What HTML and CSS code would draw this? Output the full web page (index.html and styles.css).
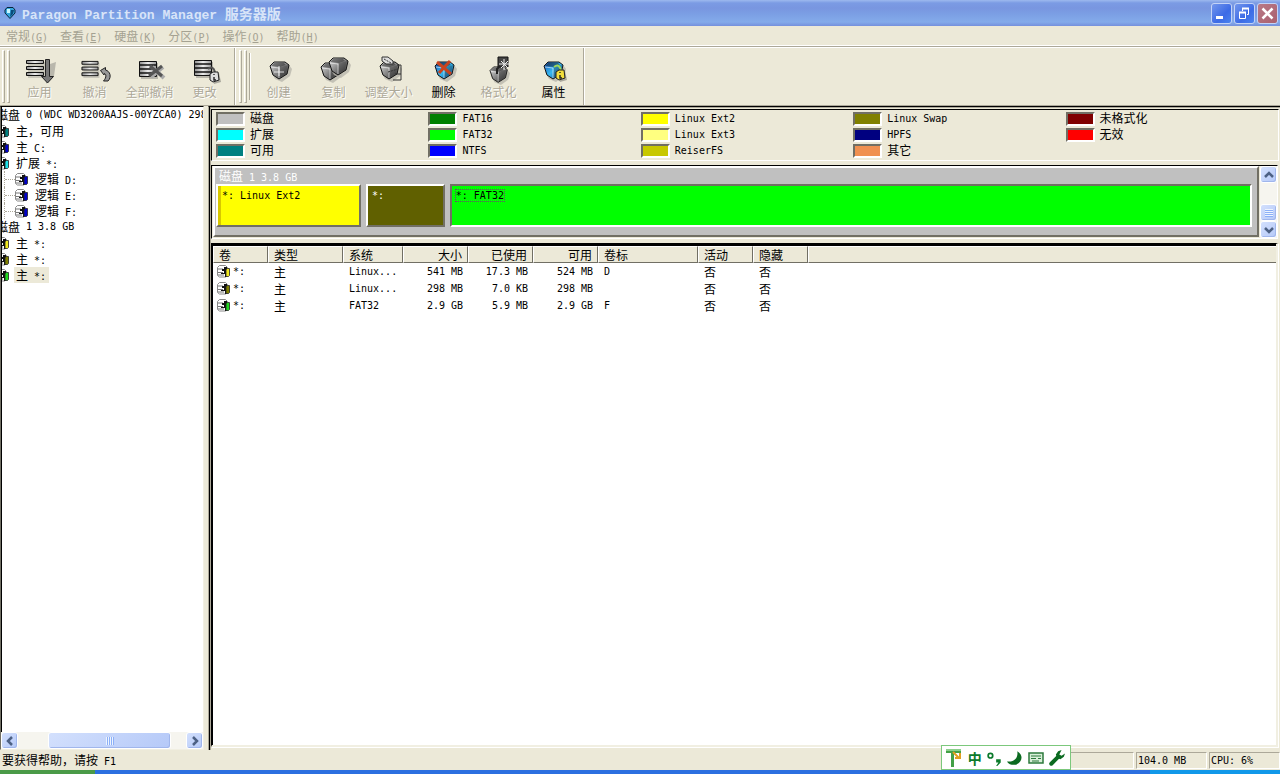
FILE: index.html
```html
<!DOCTYPE html>
<html lang="zh-CN">
<head>
    <meta charset="UTF-8">
    <meta name="viewport" content="width=device-width, initial-scale=1.0">
    <title>Paragon Partition Manager 服务器版</title>
    <link rel="stylesheet" href="styles.css">
</head>
<body>
    <svg class="defs" width="0" height="0">
        <defs>
            <linearGradient id="metal" x1="0" y1="0" x2="1" y2="1">
                <stop offset="0" stop-color="#e4e4e4"/>
                <stop offset="0.5" stop-color="#858585"/>
                <stop offset="1" stop-color="#333"/>
            </linearGradient>
            <linearGradient id="blue" x1="0" y1="0" x2="1" y2="1">
                <stop offset="0" stop-color="#1b55b8"/>
                <stop offset="0.5" stop-color="#35b8f2"/>
                <stop offset="1" stop-color="#0a4a98"/>
            </linearGradient>
            <linearGradient id="bar" x1="0" y1="0" x2="1" y2="0">
                <stop offset="0" stop-color="#8c8c8c"/>
                <stop offset="0.5" stop-color="#eee"/>
                <stop offset="1" stop-color="#999"/>
            </linearGradient>
        </defs>
        <symbol id="gem" viewBox="0 0 24 22">
            <path d="M4 5L20 4L23 8L21 15L13 21L6 18L2 11Z" fill="#b9b7ac" opacity="0.8"/>
            <path d="M1 5L5 1H16L20 4L18 13L10 18L4 14Z" fill="inherit" stroke="#151515"/>
            <path d="M5 2H15L17 4L11 6L2 5Z" fill="#111" opacity="0.45"/>
            <path d="M11 6L19 4L17 13L10 17Z" fill="#222" opacity="0.35"/>
            <path d="M2 6L10 7L10 17" fill="none" stroke="#fff" opacity="0.55"/>
        </symbol>
        <symbol id="bars" viewBox="0 0 20 19">
            <path d="M3 3H20V19H3Z" fill="#c9c7bb"/>
            <path d="M1.500 1.500H18.500V4.500H1.500ZM1.500 7.500H18.500V10.500H1.500ZM1.500 13.500H18.500V16.500H1.500Z" fill="url(#bar)" stroke="#111"/>
        </symbol>
        <symbol id="lines" viewBox="0 0 20 19">
            <path d="M3 3H20V19H3Z" fill="#b9b7ac"/>
            <path d="M1.500 1.500H18.500V16.500H1.500Z" fill="url(#bar)" stroke="#111"/>
            <path d="M1 5H18M1 9H18M1 13H18" stroke="#111" stroke-width="1.6"/>
        </symbol>
        <symbol id="tag" viewBox="0 0 14 18">
            <path d="M5 9L12 7L14 16L7 18Z" fill="#a9a79c"/>
            <path d="M1 3Q6 -1 8 6" fill="none" stroke="currentColor" stroke-width="2"/>
            <path d="M3 8L6 6L11 6L12 14L6 16L3 14Z" fill="inherit" stroke="#222"/>
            <path d="M7 8V9M7 11V14H9" fill="none" stroke="#222" stroke-width="1.4"/>
        </symbol>
        <!-- volume: cylinder with a coloured block on the right -->
        <symbol id="vol" viewBox="0 0 14 13">
            <path d="M0.500 2.500L2.500 0.500H8.500L10.500 2.500V10.500L8.500 12H2.500L0.500 10.500Z" fill="#fff" stroke="#888"/>
            <path d="M1 4H6M1 7.500H6M1 10H7" stroke="#777"/>
            <path d="M5 4H7V2H10V5H9V12H8V9H4V8H7V6H5Z" fill="#111"/>
            <path d="M9 4.500L10.500 3.500H12.500V10.500L11.500 11.500H9Z" fill="currentColor" stroke="#222" stroke-width="0.8"/>
        </symbol>
        <symbol id="arrow" viewBox="0 0 10 10">
            <path d="M1 7L5 3L9 7" fill="none" stroke="#4d6185" stroke-width="2.500"/>
        </symbol>
    </svg>

    <header class="titlebar">
        <svg class="logo" viewBox="0 0 12 12">
            <path d="M1 3L3 0.500H9L11 3V6L6 11.500L1 6Z" fill="#35a5dc" stroke="#06253d"/>
            <path d="M3 2H6V6H3Z" fill="#c9f7ff"/>
            <path d="M7 3L10 3L9 7L6 10Z" fill="#094c7c"/>
        </svg>
        <h1><span class="en">Paragon Partition Manager </span>服务器版</h1>
        <div class="winBtns">
            <button aria-label="最小化"><svg viewBox="0 0 19 19"><path d="M4 12H11V15H4Z" fill="#fff"/></svg></button>
            <button aria-label="还原"><svg viewBox="0 0 19 19"><path d="M4.500 8.500H10.500V14.500H4.500ZM7.500 7V4.500H13.500V10.500H12" fill="none" stroke="#fff"/><path d="M4 8.500H11M7 4.500H14" stroke="#fff" stroke-width="2"/></svg></button>
            <button class="close" aria-label="关闭"><svg viewBox="0 0 19 19"><path d="M4.500 4.500L14.500 14.500M14.500 4.500L4.500 14.500" stroke="#fff" stroke-width="2.500"/></svg></button>
        </div>
    </header>

    <nav class="menu">
        <button>常规<span class="en">(<u>G</u>)</span></button>
        <button>查看<span class="en">(<u>E</u>)</span></button>
        <button>硬盘<span class="en">(<u>K</u>)</span></button>
        <button>分区<span class="en">(<u>P</u>)</span></button>
        <button>操作<span class="en">(<u>O</u>)</span></button>
        <button>帮助<span class="en">(<u>H</u>)</span></button>
    </nav>

    <div class="toolbars">
        <div class="toolbar first">
            <i class="grip"></i><i class="grip"></i>
            <button disabled>
                <svg viewBox="0 0 32 30">
                    <use href="#bars" x="1" y="5" width="20" height="19"/>
                    <path d="M26 10L32 8L30 22L22 30Z" fill="#b9b7ac"/>
                    <path d="M21.500 5.500H25.500V22.500H29.500L23.500 29L17.500 22.500H21.500Z" fill="#777" stroke="#222"/>
                </svg>
                应用
            </button>
            <button disabled>
                <svg viewBox="0 0 32 30">
                    <use href="#bars" x="1" y="6" width="20" height="18"/>
                    <path d="M21.500 16.500L26.500 13.500V16C31 17 33 23 29 27H24.500C28 23 27 20 25.500 19.500L25 21Z" fill="#999" stroke="#222"/>
                </svg>
                撤消
            </button>
            <button disabled>
                <svg viewBox="0 0 32 30">
                    <use href="#lines" x="4" y="6" width="20" height="19"/>
                    <path d="M18 13L30 24M29 13L17 23" stroke="#aaa" stroke-width="4"/>
                    <path d="M16 12L28 22M28 12L15 22" stroke="#555" stroke-width="3"/>
                </svg>
                全部撤消
            </button>
            <button disabled>
                <svg viewBox="0 0 32 30">
                    <use href="#lines" x="4" y="5" width="20" height="19"/>
                    <use href="#tag" x="18" y="12" width="14" height="18" fill="#ddd" color="#555"/>
                </svg>
                更改
            </button>
        </div>
        <div class="toolbar second">
            <i class="grip"></i><i class="grip"></i><i class="line"></i>
            <button disabled>
                <svg viewBox="0 0 32 30">
                    <use href="#gem" x="6" y="7" width="24" height="22" fill="url(#metal)"/>
                    <path d="M16 12V22M11 18H21" stroke="#fff" opacity="0.8"/>
                </svg>
                创建
            </button>
            <button disabled>
                <svg viewBox="0 0 32 30">
                    <use href="#gem" x="2" y="8" width="24" height="22" fill="url(#metal)"/>
                    <use href="#gem" x="10" y="3" width="24" height="22" fill="url(#metal)"/>
                </svg>
                复制
            </button>
            <button disabled>
                <svg viewBox="0 0 32 30">
                    <use href="#gem" x="6" y="7" width="24" height="22" fill="url(#metal)"/>
                    <path d="M9 3H15L20 7V10H13L9 7Z" fill="#ddd" stroke="#333"/>
                    <path d="M24 11H28V26H20M22 20H28" fill="none" stroke="#333"/>
                    <path d="M11 5L18 9M15 18L25 15" stroke="#333" stroke-dasharray="2 1"/>
                </svg>
                调整大小
            </button>
            <button>
                <svg viewBox="0 0 32 30">
                    <use href="#gem" x="6" y="7" width="24" height="22" fill="url(#blue)"/>
                    <path d="M9 8L23 20M22 7L11 19" stroke="#c8431f" stroke-width="3"/>
                </svg>
                删除
            </button>
            <button disabled>
                <svg viewBox="0 0 32 30">
                    <use href="#gem" x="5" y="12" width="24" height="20" fill="url(#metal)"/>
                    <path d="M15 3H25V13H15Z" fill="#444" stroke="#111"/>
                    <path d="M14 20V15L17 12" fill="none" stroke="#222" stroke-width="2"/>
                    <path d="M21 5V16M16 10H27M18 7L25 14M25 7L18 14" stroke="#eee"/>
                </svg>
                格式化
            </button>
            <button>
                <svg viewBox="0 0 32 30">
                    <use href="#gem" x="5" y="7" width="24" height="22" fill="url(#blue)"/>
                    <use href="#tag" x="15" y="10" width="14" height="18" fill="#f2de3c" color="#9fd85a"/>
                </svg>
                属性
            </button>
        </div>
    </div>

    <main>
        <aside class="tree">
            <ul>
                <li class="disk">磁盘<span class="en"> 0 (WDC WD3200AAJS-00YZCA0) 298</span></li>
                <li><svg class="vol free"><use href="#vol"/></svg><span>主，可用</span></li>
                <li><svg class="vol ntfs"><use href="#vol"/></svg><span>主<span class="en"> C:</span></span></li>
                <li><svg class="vol ext"><use href="#vol"/></svg><span>扩展<span class="en"> *:</span></span></li>
                <li class="sub"><svg class="vol ntfs"><use href="#vol"/></svg><span>逻辑<span class="en"> D:</span></span></li>
                <li class="sub"><svg class="vol ntfs"><use href="#vol"/></svg><span>逻辑<span class="en"> E:</span></span></li>
                <li class="sub"><svg class="vol ntfs"><use href="#vol"/></svg><span>逻辑<span class="en"> F:</span></span></li>
                <li class="disk">磁盘<span class="en"> 1 3.8 GB</span></li>
                <li><svg class="vol ext2"><use href="#vol"/></svg><span>主<span class="en"> *:</span></span></li>
                <li><svg class="vol swap"><use href="#vol"/></svg><span>主<span class="en"> *:</span></span></li>
                <li class="active"><svg class="vol fat32"><use href="#vol"/></svg><span>主<span class="en"> *:</span></span></li>
            </ul>
            <div class="hscroll">
                <button aria-label="向左"><svg class="left" viewBox="0 0 10 10"><use href="#arrow"/></svg></button>
                <div class="track"><div class="thumb"></div></div>
                <button aria-label="向右"><svg class="right" viewBox="0 0 10 10"><use href="#arrow"/></svg></button>
            </div>
        </aside>

        <section class="work">
            <ul class="legend">
                <li><i class="sw c-disk"></i>磁盘</li>
                <li><i class="sw c-ext"></i>扩展</li>
                <li><i class="sw c-free"></i>可用</li>
                <li><i class="sw c-fat16"></i><span class="en">FAT16</span></li>
                <li><i class="sw c-fat32"></i><span class="en">FAT32</span></li>
                <li><i class="sw c-ntfs"></i><span class="en">NTFS</span></li>
                <li><i class="sw c-ext2"></i><span class="en">Linux Ext2</span></li>
                <li><i class="sw c-ext3"></i><span class="en">Linux Ext3</span></li>
                <li><i class="sw c-reiser"></i><span class="en">ReiserFS</span></li>
                <li><i class="sw c-swap"></i><span class="en">Linux Swap</span></li>
                <li><i class="sw c-hpfs"></i><span class="en">HPFS</span></li>
                <li><i class="sw c-other"></i>其它</li>
                <li><i class="sw c-unformat"></i>未格式化</li>
                <li><i class="sw c-invalid"></i>无效</li>
            </ul>

            <div class="diskMap">
                <div class="diskBox">
                    <div class="diskName">磁盘<span class="en"> 1 3.8 GB</span></div>
                    <div class="parts">
                        <div class="part p-ext2"><span class="en">*: Linux Ext2</span></div>
                        <div class="part p-swap"><span class="en">*:</span></div>
                        <div class="part p-fat32"><span class="en">*: FAT32</span></div>
                    </div>
                </div>
                <div class="vscroll">
                    <button aria-label="向上"><svg viewBox="0 0 10 10"><use href="#arrow"/></svg></button>
                    <div class="track"><div class="thumb"></div></div>
                    <button aria-label="向下"><svg class="down" viewBox="0 0 10 10"><use href="#arrow"/></svg></button>
                </div>
            </div>

            <div class="list">
                <table>
                    <colgroup>
                        <col class="w55"><col class="w75"><col class="w60"><col class="w65"><col class="w65"><col class="w65"><col class="w100"><col class="w55"><col class="w55"><col>
                    </colgroup>
                    <thead>
                        <tr><th>卷</th><th>类型</th><th>系统</th><th class="num">大小</th><th class="num">已使用</th><th class="num">可用</th><th>卷标</th><th>活动</th><th>隐藏</th><th></th></tr>
                    </thead>
                    <tbody>
                        <tr><td class="en"><svg class="vol ext2"><use href="#vol"/></svg>*:</td><td>主</td><td class="en">Linux...</td><td class="en num">541 MB</td><td class="en num">17.3 MB</td><td class="en num">524 MB</td><td class="en">D</td><td>否</td><td>否</td><td></td></tr>
                        <tr><td class="en"><svg class="vol swap"><use href="#vol"/></svg>*:</td><td>主</td><td class="en">Linux...</td><td class="en num">298 MB</td><td class="en num">7.0 KB</td><td class="en num">298 MB</td><td></td><td>否</td><td>否</td><td></td></tr>
                        <tr><td class="en"><svg class="vol fat32"><use href="#vol"/></svg>*:</td><td>主</td><td class="en">FAT32</td><td class="en num">2.9 GB</td><td class="en num">5.9 MB</td><td class="en num">2.9 GB</td><td class="en">F</td><td>否</td><td>否</td><td></td></tr>
                    </tbody>
                </table>
            </div>
        </section>
    </main>

    <footer class="status">
        <div class="hint">要获得帮助，请按<span class="en"> F1</span></div>
        <div class="pane wide"></div>
        <div class="pane en">104.0 MB</div>
        <div class="pane en">CPU: 6%</div>
    </footer>
    <div class="taskbar"><div class="start"></div><div class="tasks"></div><div class="tray"></div></div>

    <!-- input method bar floating over the window -->
    <div class="ime">
        <svg viewBox="0 0 18 20"><path d="M1 1H16V5H9V19H6V5H1Z" fill="#43a047"/><path d="M1 1H16V3H1Z" fill="#8bd08b"/><path d="M8 4L14 10M15 5V10H10" fill="none" stroke="#e0a020" stroke-width="2"/></svg>
        <span>中</span>
        <svg viewBox="0 0 14 14"><circle cx="3" cy="5" r="2" fill="none" stroke="#0b7a2b" stroke-width="1.500"/><path d="M8 8H12V11L9 14H8L10 11H8Z" fill="#0b7a2b"/></svg>
        <svg viewBox="0 0 14 14"><path d="M9 1C16 5 12 13 6 13C3 13 1 12 0 10C6 11 10 7 9 1Z" fill="#0b6a20"/></svg>
        <svg viewBox="0 0 16 14"><path d="M1 2H15V12H1Z" fill="#d9efd9" stroke="#2c7a3c" stroke-width="1.500"/><path d="M3 5H13M3 7.500H8M10 7.500H13M4 10H11" stroke="#2c7a3c"/></svg>
        <svg viewBox="0 0 14 14"><path d="M2 12L8 6" stroke="#0b6a20" stroke-width="3.500" stroke-linecap="round"/><path d="M11 0L8 1L6 4L7 7L10 8L13 6L14 3L11 5L9 4Z" fill="#0b6a20"/></svg>
    </div>
</body>
</html>
```
FILE: styles.css
```css
*{
    box-sizing: border-box;
}
body{
    margin: 0;
    height: 100vh;
    display: flex;
    flex-direction: column;
    overflow: hidden;
    background-color: #ece9d8;
    font-family: "Noto Sans CJK SC", sans-serif;
    font-size: 12px;
    line-height: 16px;
    color: black;
}
ul{
    list-style: none;
    margin: 0;
    padding: 0;
}
button{
    font: inherit;
    color: inherit;
    background: none;
    border: none;
    padding: 0;
}
svg{
    display: block;
}
.defs{
    position: absolute;
}
.en{
    font-family: "DejaVu Sans Mono", monospace;
    font-size: 10px;
    white-space: pre;
}
span.en{
    line-height: 12px;
}

/* title bar */
.titlebar{
    height: 26px;
    flex-shrink: 0;
    display: flex;
    align-items: center;
    padding: 0 2px 0 4px;
    background: linear-gradient(#9db9ee 0, #7b9be4 3px, #7996e0 8px, #7b9fe4 14px, #84abea 22px, #7590dc 26px);
}
.logo{
    width: 12px;
    height: 12px;
}
.titlebar h1{
    flex: 1;
    margin: 0 0 0 6px;
    font-size: 14px;
    line-height: 24px;
    color: #d8e4f8;
}
.titlebar h1 .en{
    font-family: "Liberation Mono", monospace;
    font-size: 13px;
}
.winBtns{
    display: flex;
    gap: 2px;
}
.winBtns button{
    width: 21px;
    height: 21px;
    border: 1px solid #c3d3f7;
    border-radius: 3px;
    background: linear-gradient(135deg, #7396ec, #3c6be6 60%, #4a83ee);
}
.winBtns .close{
    background: linear-gradient(135deg, #b97a86, #a9606f);
}

/* menu */
.menu{
    height: 21px;
    flex-shrink: 0;
    display: flex;
    align-items: center;
    gap: 12px;
    padding: 0 6px;
    border-bottom: 1px solid #aca899;
    box-shadow: inset 0 -1px #fff;
    color: #a5a292;
}

/* toolbars */
.toolbars{
    height: 59px;
    flex-shrink: 0;
    display: flex;
    border-top: 1px solid #fff;
    border-bottom: 1px solid #aca899;
}
.toolbar{
    display: flex;
    padding-left: 3px;
    border-right: 1px solid #aca899;
    box-shadow: 1px 0 #fff;
}
.grip{
    width: 3px;
    margin: 2px 2px 2px 0;
    border: 1px solid #aca899;
    border-top-color: #fff;
    border-left-color: #fff;
}
.line{
    width: 2px;
    margin: 5px 0;
    border-left: 1px solid #aca899;
    border-right: 1px solid #fff;
}
.toolbar button{
    width: 55px;
    padding-top: 6px;
    display: flex;
    flex-direction: column;
    align-items: center;
    line-height: 16px;
    white-space: nowrap;
}
.toolbar button:disabled{
    color: #aca899;
    text-shadow: 1px 1px #fff;
}
.toolbar svg{
    width: 32px;
    height: 30px;
    overflow: visible;
}
.first{
    padding-left: 2px;
    padding-right: 2px;
}
.second{
    padding-left: 4px;
    padding-right: 2px;
}

/* tree */
main{
    flex: 1;
    min-height: 0;
    display: flex;
}
.tree{
    width: 204px;
    flex-shrink: 0;
    display: flex;
    flex-direction: column;
    border: 1px solid #716f64;
    border-top-color: #000;
    border-right-color: #f1efe2;
    border-bottom-color: #f1efe2;
    background-color: #fff;
    overflow: hidden;
}
.tree ul{
    flex: 1;
    min-height: 0;
    overflow: hidden;
    border-left: 1px solid #000;
}
.tree li{
    height: 16px;
    display: flex;
    align-items: center;
    margin-left: -6px;
    white-space: nowrap;
}
.tree .vol + span{
    padding: 0 3px 0 2px;
    margin-left: 4px;
}
.tree .sub{
    margin-left: 2px;
    border-left: 1px dotted #aca899;
}
.tree .sub::before{
    content: '';
    width: 10px;
    border-top: 1px dotted #aca899;
}
.tree .active > span{
    background-color: #ece9d8;
}
.vol{
    width: 14px;
    height: 13px;
    flex-shrink: 0;
}
.vol.free{ color: #008080; }
.vol.ntfs{ color: #0000c8; }
.vol.ext{ color: #20e0e8; }
.vol.ext2{ color: #f0e820; }
.vol.swap{ color: #808000; }
.vol.fat32{ color: #20d820; }

/* scrollbars */
.hscroll, .vscroll{
    display: flex;
    flex-shrink: 0;
    background-color: #f6f5ef;
}
.hscroll{
    height: 17px;
}
.vscroll{
    width: 17px;
    flex-direction: column;
}
.hscroll button, .vscroll button, .thumb{
    flex-shrink: 0;
    border: 1px solid #fff;
    border-radius: 3px;
    background: linear-gradient(135deg, #d3e0fd, #b5c9f8);
    box-shadow: inset -1px -1px #a0b6ec;
}
.hscroll button, .vscroll button{
    width: 17px;
    height: 17px;
    display: flex;
    align-items: center;
    justify-content: center;
}
.hscroll button svg, .vscroll button svg{
    width: 10px;
    height: 10px;
}
.left{ transform: rotate(-90deg); }
.right{ transform: rotate(90deg); }
.down{ transform: rotate(180deg); }
.track{
    flex: 1;
    display: flex;
}
.thumb{
    display: flex;
    align-items: center;
    justify-content: center;
}
.thumb::before{
    content: '';
    width: 8px;
    height: 8px;
    background: repeating-linear-gradient(90deg, #eef4fe 0 1px, #8cb0f8 1px 2px);
}
.hscroll .thumb{
    width: 73%;
    margin-left: auto;
    margin-right: 15px;
}
.vscroll .track{
    align-items: flex-end;
}
.vscroll .thumb{
    width: 17px;
    height: 17px;
}
.vscroll .thumb::before{
    background: repeating-linear-gradient(#eef4fe 0 1px, #8cb0f8 1px 2px);
}

/* right side */
.work{
    flex: 1;
    min-width: 0;
    margin-left: 4px;
    display: flex;
    flex-direction: column;
    gap: 4px;
    padding: 2px 1px 1px 2px;
    border-left: 1px solid #aca899;
    border-top: 1px solid #000;
    box-shadow: inset 1px 0 #000, inset 2px 1px #aca899;
}
.legend{
    display: grid;
    grid-template-columns: repeat(5, 1fr);
    grid-template-rows: repeat(3, 16px);
    grid-auto-flow: column;
    height: 52px;
    flex-shrink: 0;
    padding-left: 4px;
    border: 1px solid #000;
    border-right-color: #fff;
    border-bottom-color: #fff;
}
.legend li{
    display: flex;
    gap: 5px;
    line-height: 16px;
}
.legend .en{
    line-height: 18px;
}
.sw{
    width: 29px;
    height: 14px;
    margin-top: 2px;
    border: 2px solid #716f64;
    border-right-color: #fff;
    border-bottom-color: #fff;
}
.c-disk{ background-color: #c0c0c0; }
.c-ext{ background-color: #00ffff; }
.c-free{ background-color: #008080; }
.c-fat16{ background-color: #008000; }
.c-fat32{ background-color: #00ff00; }
.c-ntfs{ background-color: #0000ff; }
.c-ext2{ background-color: #ffff00; }
.c-ext3{ background-color: #ffff80; }
.c-reiser{ background-color: #c8c800; }
.c-swap{ background-color: #808000; }
.c-hpfs{ background-color: #000080; }
.c-other{ background-color: #f09050; }
.c-unformat{ background-color: #800000; }
.c-invalid{ background-color: #ff0000; }

.diskMap{
    height: 74px;
    flex-shrink: 0;
    display: flex;
    gap: 1px;
    margin-right: 1px;
    border: 1px solid #000;
    border-right-color: #fff;
    border-bottom-color: #fff;
    outline: 0 solid #aca899;
}
.diskBox{
    flex: 1;
    margin-left: 1px;
    margin-bottom: 1px;
    padding: 0 5px 0 1px;
    border: 2px solid #fff;
    border-right-color: #716f64;
    border-bottom-color: #716f64;
    background-color: #c0c0c0;
}
.diskName{
    padding-left: 3px;
    color: #fff;
}
.parts{
    display: flex;
    gap: 5px;
}
.part{
    height: 43px;
    border: 2px solid #fff;
    border-right-color: #716f64;
    border-bottom-color: #716f64;
    padding: 1px 4px;
    line-height: 14px;
}
.p-ext2{
    width: 14%;
    background-color: #ffff00;
    box-shadow: inset 3px 0 #d8c800;
}
.p-swap{
    width: 7.6%;
    background-color: #606000;
    color: #fff;
}
.p-fat32{
    flex: 1;
    background-color: #00ff00;
    border-color: #716f64 #fff #fff #716f64;
}
.p-fat32 span{
    outline: 1px dotted #704070;
}

.list{
    flex: 1;
    min-height: 0;
    margin-right: 1px;
    margin-bottom: 2px;
    padding: 2px 0 0 1px;
    border: 1px solid #000;
    border-right: 2px solid #f1efe2;
    border-bottom: 2px solid #f1efe2;
    box-shadow: inset 1px 2px #000, inset 0 1px #aca899, 1px 1px #fff;
    background-color: #fff;
}
table{
    width: 100%;
    table-layout: fixed;
    border-collapse: separate;
    border-spacing: 0;
}
.w55{ width: 55px; }
.w60{ width: 60px; }
.w65{ width: 65px; }
.w75{ width: 75px; }
.w100{ width: 100px; }
th{
    height: 17px;
    padding: 0 5px;
    text-align: left;
    font-weight: normal;
    line-height: 14px;
    background-color: #ece9d8;
    border: 1px solid #fff;
    border-right-color: #716f64;
    border-bottom-color: #716f64;
}
th:last-child{
    border-right: none;
}
td{
    height: 17px;
    padding: 0 6px;
    line-height: 17px;
}
td:first-child{
    display: flex;
    align-items: center;
    gap: 2px;
    padding-left: 4px;
}
.num{
    text-align: right;
}
td.num{
    padding-right: 5px;
}

/* status bar */
.status{
    height: 20px;
    flex-shrink: 0;
    display: flex;
    gap: 2px;
    padding-top: 2px;
    line-height: 16px;
}
.hint{
    flex: 1;
    padding-left: 2px;
}
.pane{
    width: 71px;
    height: 17px;
    padding-left: 1px;
    border: 1px solid #aca899;
    border-right-color: #fff;
    border-bottom-color: #fff;
}
.wide{
    width: 192px;
}
.taskbar{
    height: 4px;
    flex-shrink: 0;
    display: flex;
}
.start{
    width: 95px;
    background-color: #4a9a48;
}
.tasks{
    flex: 1;
    background-color: #2c6fe0;
}
.tray{
    width: 130px;
    background-color: #1198e9;
}

.ime{
    position: absolute;
    right: 209px;
    bottom: 4px;
    width: 130px;
    height: 25px;
    display: flex;
    align-items: center;
    justify-content: space-between;
    padding: 0 5px 0 3px;
    border: 1px solid #7cc87c;
    background-color: #fff;
    color: #0b7a2b;
    font-size: 14px;
    font-weight: bold;
}
.ime svg{
    width: 16px;
    height: 16px;
}
.ime svg:first-child{
    width: 18px;
    height: 20px;
}
```
